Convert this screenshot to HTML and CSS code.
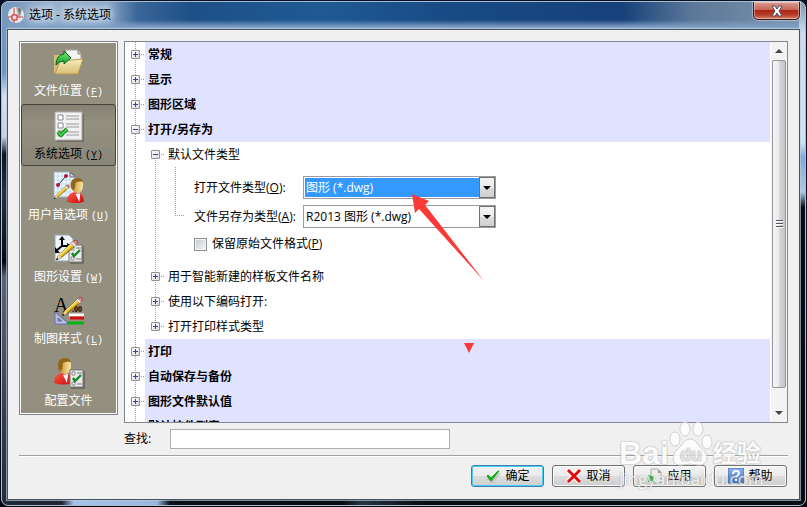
FILE: index.html
```html
<!DOCTYPE html>
<html lang="zh-CN">
<head>
<meta charset="utf-8">
<title>选项 - 系统选项</title>
<link rel="stylesheet" href="styles.css">
</head>
<body>
<svg class="defs" aria-hidden="true">
  <defs>
    <linearGradient id="skin" x1="0" x2="1"><stop offset="0" stop-color="#b47a24"/><stop offset=".45" stop-color="#e2b964"/><stop offset="1" stop-color="#fbe7a8"/></linearGradient>
    <linearGradient id="gold" x1="0" y1="0" x2="0" y2="1"><stop offset="0" stop-color="#f8ecc0"/><stop offset="1" stop-color="#d9bd74"/></linearGradient>
    <linearGradient id="red" x1="0" x2="1" y2="1"><stop offset="0" stop-color="#ff5a50"/><stop offset="1" stop-color="#c80a0a"/></linearGradient>
    <linearGradient id="green" x1="0" y1="0" x2="0" y2="1"><stop offset="0" stop-color="#7cf07c"/><stop offset="1" stop-color="#0b9a1c"/></linearGradient>
    <linearGradient id="blue" x1="0" y1="0" x2="0" y2="1"><stop offset="0" stop-color="#8db4ea"/><stop offset="1" stop-color="#3f74bd"/></linearGradient>
    <g id="pencil">
      <path d="m1 24 2-5L19 4l4 4L6 22z" fill="#f6cf30" stroke="#4a3810" stroke-width=".8"/>
      <path d="M4 19 19 5" stroke="#fff3a0" stroke-width="1.2"/>
      <path d="M6 21 22 7" stroke="#b5850f" stroke-width="1"/>
      <path d="m20 3 1-1q2-1 4 0 1 2 0 4l-1 1z" fill="#e88080" stroke="#7e3333" stroke-width=".8"/>
      <path d="m18 5 2-2 4 4-2 2z" fill="#e8e8e8" stroke="#888" stroke-width=".5"/>
      <path d="m1 24 2-5 3 3z" fill="#f3d9a4"/><path d="m0 25 1-3 2 2z" fill="#111"/>
    </g>
    <g id="person">
      <path d="M1 26q0-8 7-10h5q5 1 6 10-9 3-18 0z" fill="url(#red)"/>
      <path d="m10 18 4 8 1-9z" fill="#fff"/>
      <path d="M6 8q0-6 6-6t6 6q0 9-6 9t-6-9z" fill="url(#skin)"/>
      <path d="M5 10q-1-9 7-9 5 0 6 4-4-1-8 1 0 5-2 8-3-1-3-4z" fill="#94661a"/>
    </g>
    <g id="sheet">
      <path d="M2 2h14v18H2z" fill="#55534b" opacity=".6"/>
      <path d="M1 1h13v17H1z" fill="#ececec" stroke="#777"/>
      <path d="M3 3h3v3H3zM3 13h3v3H3z" fill="#fff" stroke="#888"/>
      <path d="M8 4h5M8 15h5" stroke="#777"/>
      <path d="m4 9 2 3 6-6" fill="none" stroke="#178a27" stroke-width="2.4"/>
    </g>
  </defs>
</svg>

<div class="window">
  <header class="titlebar">
    <svg class="app-icon" viewBox="0 0 18 18" aria-hidden="true">
      <circle cx="9" cy="9" r="8" fill="#e9e7e6"/>
      <path d="m9 1 2 9 2 1 2-7q-2-3-6-3z" fill="#a9a6a6"/><path d="m11 2 2 7 1-6z" fill="#6f6c6c"/>
      <path d="M1 11h15M7 2v15" stroke="#d23c3c"/>
      <path d="M5 9h5v5H5z" fill="#f2d6d6" stroke="#b82020"/>
    </svg>
    <h1 class="title">选项 - 系统选项</h1>
    <button class="close" type="button" aria-label="关闭">
      <svg viewBox="0 0 14 12" width="14" height="12" aria-hidden="true"><path d="M2 1h3l2 3 2-3h3l-3 5 3 5H9L7 8l-2 3H2l3-5z" fill="#fff" stroke="#4c5468"/></svg>
    </button>
  </header>

  <main class="client">
    <div class="body">
      <nav class="sidebar">
        <button class="nav-item" type="button">
          <svg viewBox="0 0 32 32" width="32" height="32" aria-hidden="true">
            <path d="M1 8h8l2 2h10v16H1z" fill="#d5bd76"/>
            <path d="M13 3h12l3 4v12H13z" fill="#f3f3f3" stroke="#aaa"/><path d="M25 3v4h3" fill="#ccc" stroke="#888"/>
            <path d="m7 14 23-2-5 15H2z" fill="url(#gold)" stroke="#b59a50"/>
            <path d="M3 18q0-10 8-11V4l7 7-7 6v-3q-5 0-8 4z" fill="url(#green)" stroke="#08661a"/>
          </svg>
          <span>文件位置 <kbd>(<u>F</u>)</kbd></span>
        </button>
        <button class="nav-item selected" type="button" aria-current="page">
          <svg viewBox="0 0 32 32" width="32" height="32" aria-hidden="true">
            <path d="M4 4h27v28H4z" fill="#5b5950" opacity=".6"/>
            <path d="M2 2h27v28H2z" fill="#f1f1f1" stroke="#aaa"/>
            <path d="M5 5h5v5H5zM5 13h5v5H5zM5 21h5v5H5z" fill="#fff" stroke="#888"/>
            <path d="M13 6h13M13 9h13M13 14h13M13 17h13M13 22h13M13 25h13" stroke="#999"/>
            <path d="m5 22 3 3 6-6" fill="none" stroke="#178a27" stroke-width="4"/><path d="m5 22 3 3 6-6" fill="none" stroke="#43cf43" stroke-width="2"/>
          </svg>
          <span>系统选项 <kbd>(<u>Y</u>)</kbd></span>
        </button>
        <button class="nav-item" type="button">
          <svg viewBox="0 0 32 32" width="32" height="32" aria-hidden="true">
            <path d="M1 1h16l5 5v20H1z" fill="#f4f9fd" stroke="#9ab"/>
            <path d="M5 1v25M9 1v25M13 1v25M17 1v25M1 5h20M1 9h20M1 13h20M1 17h20M1 21h20" stroke="#bcdcf0"/>
            <path d="M17 1v5h5z" fill="#d5dde5" stroke="#667"/>
            <path d="m5 14 8-9" stroke="#333"/><circle cx="5" cy="14" r="2" fill="#b4163a"/><circle cx="13" cy="5" r="2" fill="#b4163a"/>
            <use href="#pencil" transform="translate(1 13) scale(.6)"/>
            <use href="#person" transform="translate(13 6) scale(.95)"/>
          </svg>
          <span>用户首选项 <kbd>(<u>U</u>)</kbd></span>
        </button>
        <button class="nav-item" type="button">
          <svg viewBox="0 0 32 32" width="32" height="32" aria-hidden="true">
            <path d="M2 2h14l4 4v22H2z" fill="#eef4fb" stroke="#9aa6b3"/>
            <path d="M9 13V5M9 13h9M9 13l-6 5" stroke="#000" stroke-width="2"/>
            <path d="m6 7 3-4 3 4zM14 10l5 3-5 4zM2 14v6h5z" fill="#000"/>
            <use href="#sheet" x="15" y="11"/>
            <use href="#pencil" transform="translate(3 6) scale(.85)"/>
          </svg>
          <span>图形设置 <kbd>(<u>W</u>)</kbd></span>
        </button>
        <button class="nav-item" type="button">
          <svg viewBox="0 0 32 32" width="32" height="32" aria-hidden="true">
            <text x="1" y="17" class="glyph-a">A</text><text x="19" y="17" class="glyph-n">.00</text>
            <path d="M2 17v12h14z" fill="#b9bedf" stroke="#6670b3"/><path d="M5 23v3h4z" fill="#949080" stroke="#6670b3"/>
            <path d="M16 20h15" stroke="#fff" stroke-width="3"/><path d="M17 23h14" stroke="#d01010" stroke-width="3"/><path d="M14 28h17" stroke="#08b414" stroke-width="3"/>
            <use href="#pencil" transform="translate(9 1) scale(.8)"/>
          </svg>
          <span>制图样式 <kbd>(<u>L</u>)</kbd></span>
        </button>
        <button class="nav-item" type="button">
          <svg viewBox="0 0 32 32" width="32" height="32" aria-hidden="true">
            <use href="#person"/>
            <use href="#sheet" x="16" y="12"/>
          </svg>
          <span>配置文件</span>
        </button>
      </nav>

      <div class="right">
        <section class="tree">
          <div class="tree-content">
            <div class="row group"><button class="toggle plus" type="button" aria-label="展开"></button><span class="label">常规</span></div>
            <div class="row group"><button class="toggle plus" type="button" aria-label="展开"></button><span class="label">显示</span></div>
            <div class="row group"><button class="toggle plus" type="button" aria-label="展开"></button><span class="label">图形区域</span></div>
            <div class="row group"><button class="toggle" type="button" aria-label="折叠"></button><span class="label">打开/另存为</span></div>
            <div class="children">
              <div class="row"><button class="toggle" type="button" aria-label="折叠"></button><span class="label">默认文件类型</span></div>
              <form class="form">
                <div class="field">
                  <label for="open-type">打开文件类型(<u>O</u>):</label>
                  <div class="combo focused"><select id="open-type"><option>图形 (*.dwg)</option></select><span class="drop"></span></div>
                </div>
                <div class="field">
                  <label for="save-type">文件另存为类型(<u>A</u>):</label>
                  <div class="combo"><select id="save-type"><option>R2013 图形 (*.dwg)</option></select><span class="drop"></span></div>
                </div>
                <div class="check"><input type="checkbox" id="keep"><label for="keep">保留原始文件格式(<u>P</u>)</label></div>
              </form>
              <div class="row"><button class="toggle plus" type="button" aria-label="展开"></button><span class="label">用于智能新建的样板文件名称</span></div>
              <div class="row"><button class="toggle plus" type="button" aria-label="展开"></button><span class="label">使用以下编码打开:</span></div>
              <div class="row"><button class="toggle plus" type="button" aria-label="展开"></button><span class="label">打开打印样式类型</span></div>
            </div>
            <div class="row group"><button class="toggle plus" type="button" aria-label="展开"></button><span class="label">打印</span></div>
            <div class="row group"><button class="toggle plus" type="button" aria-label="展开"></button><span class="label">自动保存与备份</span></div>
            <div class="row group"><button class="toggle plus" type="button" aria-label="展开"></button><span class="label">图形文件默认值</span></div>
            <div class="row group"><button class="toggle plus" type="button" aria-label="展开"></button><span class="label">默认控件列表</span></div>
          </div>
          <div class="scrollbar" aria-hidden="true">
            <span class="scroll-end"><svg viewBox="0 0 8 4" width="8" height="4"><path d="M0 4 4 0l4 4z" fill="#444"/></svg></span>
            <span class="thumb"><i></i><i></i><i></i></span>
            <span class="scroll-end bottom"><svg viewBox="0 0 8 4" width="8" height="4"><path d="M0 0h8L4 4z" fill="#444"/></svg></span>
          </div>
          <svg class="pointer" viewBox="0 0 76 164" width="76" height="164" aria-hidden="true">
            <path d="m2 3 17 7-4 4 59 76L9 18l-4 4z" fill="#fb3a38"/>
            <path d="M54 152h10l-5 10z" fill="#fb3a38"/>
          </svg>
        </section>
        <div class="search">
          <label for="find">查找:</label>
          <input id="find" type="text">
        </div>
      </div>
    </div>

    <hr class="rule">

    <footer class="actions">
      <button class="btn default" type="button">
        <svg viewBox="0 0 16 16" width="16" height="16" aria-hidden="true"><path d="m3 10 4 4 8-9" fill="none" stroke="#aaa" stroke-width="2" opacity=".5"/><path d="m2 8 1-1 3 3 7-7h1L6 13z" fill="#16b51c" stroke="#13a819"/></svg>确定</button>
      <button class="btn" type="button">
        <svg viewBox="0 0 16 16" width="16" height="16" aria-hidden="true"><path d="m2 2 12 12M14 2 2 14" stroke="#fff" stroke-width="5"/><path d="m2 2 12 12M14 2 2 14" stroke="#e30b10" stroke-width="3"/></svg>取消</button>
      <button class="btn" type="button">
        <svg viewBox="0 0 16 16" width="16" height="16" aria-hidden="true"><path d="M4 1h7l3 3v11H4z" fill="#ececec" stroke="#aaa"/><path d="M11 1v4h3" fill="#999"/><path d="m1 7 6 2v6l-3-2-3 1 1-3z" fill="#2cae34"/></svg>应用</button>
      <button class="btn" type="button">
        <svg viewBox="0 0 16 16" width="16" height="16" aria-hidden="true"><path d="M0 0h16v15H0z" fill="url(#blue)" stroke="#4a6fa8"/><path d="M5 6q0-3 3-3t3 2q0 2-3 4M8 11v2" fill="none" stroke="#fff" stroke-width="2"/></svg>帮助</button>
    </footer>
  </main>
</div>

<div class="watermark" aria-hidden="true">
  <div class="brand"><span class="bai">Bai</span>
    <svg viewBox="0 0 44 48" width="44" height="48">
      <g class="paw"><ellipse cx="6" cy="18" rx="5" ry="7"/><ellipse cx="16" cy="8" rx="5" ry="7"/><ellipse cx="29" cy="8" rx="5" ry="7"/><ellipse cx="38" cy="21" rx="5" ry="7"/>
      <path d="M21 18q5 0 9 7 9 7 8 13-2 7-9 6-8-2-16 0-8 1-9-6 0-7 8-13 4-7 9-7z"/></g>
      <text x="11" y="40" class="du">du</text>
    </svg>
    <span class="jy">经验</span></div>
  <div class="url">jingyan.baidu.com</div>
</div>
</body>
</html>
```
FILE: styles.css
```css
* { box-sizing: border-box; }

body {
  margin: 0;
  padding: 1px;
  height: 100vh;
  background: linear-gradient(#04102a, #05142e 40%, #020812);
  font: 12px/16px "Open Sans", "Noto Sans CJK SC", sans-serif;
  color: #000;
}

button, input, select { font: inherit; color: inherit; margin: 0; }
button { padding: 0; border: 0; background: none; }
.defs { position: absolute; width: 0; height: 0; }

/* Glass frame */
.window {
  display: flex;
  flex-direction: column;
  height: 100%;
  padding: 0 5px 5px;
  border: 1px solid #aebdca;
  border-radius: 7px;
  background:
    linear-gradient(#7899bf, #7196bf 70px, #d5e2f3 95px, #c3d0e3 135px, #0d141d 152px, #26323f 190px, #101318 245px, #05070b 260px, #5e6272 275px, #50505f 350px, #343a4a 420px, #202c3c) left / 6px 100% no-repeat,
    linear-gradient(#7d95ae, #c9dcf0 30px, #cfe4f8 140px, #7fa8d6 155px, #a9c9ec 190px, #060c12 205px) right / 6px 100% no-repeat,
    linear-gradient(90deg, #1d2a39, #222334 60px, #a3c4ea 72px, #9ab7e0 155px, #0a1119 168px, #080d14 340px, #263444 360px, #080d14 420px) bottom / 100% 6px no-repeat,
    linear-gradient(transparent 18px, #7f9fc5 25px, #b8d0ea 29px, transparent 29px),
    linear-gradient(90deg, #7293ba, #98b1cd 50px, #8ba8c9 105px, #3b6699 135px, #1d5087 190px, #1f5a93 320px, #184a84 450px, #17417a 620px, #5c7899 690px, #7089a5 760px, #7d95ae);
}

.titlebar {
  display: flex;
  align-items: flex-start;
  flex: 0 0 27px;
}
.app-icon { width: 18px; height: 18px; margin: 4px 4px 0 0; }
.title {
  flex: 1;
  margin: 5px 0 0;
  font: inherit;
  text-shadow: 0 0 6px #dce8f5, 0 0 8px #dce8f5, 0 0 10px #dce8f5;
}
.close {
  display: flex;
  align-items: center;
  justify-content: center;
  width: 47px;
  height: 18px;
  border: 1px solid #40161d;
  border-top: 0;
  border-radius: 0 0 5px 5px;
  background: linear-gradient(#dc9c92, #c96558 45%, #ac2815 50%, #b63c25 75%, #d8826b);
  box-shadow: inset 0 0 0 1px #ffffff66, 0 0 1px 1px #ffffff66;
}

.client {
  display: flex;
  flex-direction: column;
  flex: 1;
  min-height: 0;
  padding: 11px 11px 12px;
  border: 1px solid #46545f;
  background: #f0f0f0;
  box-shadow: 0 0 0 1px #bccbd8aa;
}
.body {
  display: flex;
  align-items: flex-start;
  gap: 6px;
  flex: 1;
  min-height: 0;
}

/* Category bar */
.sidebar {
  flex: 0 0 99px;
  padding: 0 1px;
  border: 1px solid #7f8287;
  background: #949080;
  box-shadow: inset 0 0 0 1px #fff;
}
.nav-item {
  display: flex;
  flex-direction: column;
  align-items: center;
  gap: 4px;
  width: 100%;
  height: 62px;
  padding-top: 5px;
  color: #fff;
  white-space: nowrap;
}
.nav-item kbd { font: 10px/16px "Liberation Mono", monospace; }
.nav-item.selected {
  border: 1px solid #43423b;
  border-radius: 3px;
  background: linear-gradient(#858273, #949080 30%, #89867a);
  color: #000;
}
.glyph-a { font: 20px "Liberation Serif", serif; }
.glyph-n { font: bold 8px "Liberation Serif", serif; }

/* Tree */
.right {
  display: flex;
  flex-direction: column;
  gap: 6px;
  flex: 1;
  min-width: 0;
  height: 100%;
}
.tree {
  position: relative;
  display: flex;
  flex: 1;
  min-height: 0;
  overflow: hidden;
  border: 1px solid #82868f;
  background: #fff;
}
.tree-content {
  flex: 1;
  min-width: 0;
  background: repeating-linear-gradient(#a0a0a0 0 1px, transparent 1px 2px) 10px 0 / 1px 100% no-repeat;
}
.row {
  display: flex;
  align-items: center;
  gap: 1px;
  height: 25px;
  padding-left: 6px;
}
.row .label { padding-left: 7px; }
.group {
  font-weight: bold;
  background: linear-gradient(#dfe3ff, #dfe3ff) 20px 0 / 100% 100% no-repeat;
}
.children {
  margin-left: 20px;
  background: repeating-linear-gradient(#a0a0a0 0 1px, transparent 1px 2px) 10px 16px / 1px 168px no-repeat;
}
.toggle {
  flex: 0 0 9px;
  height: 9px;
  border: 1px solid #8e8f8f;
  border-radius: 1px;
  background:
    linear-gradient(#2b4a94, #2b4a94) center / 5px 1px no-repeat,
    linear-gradient(135deg, #fff, #dcdcdc);
}
.toggle.plus {
  background:
    linear-gradient(#2b4a94, #2b4a94) center / 5px 1px no-repeat,
    linear-gradient(#2b4a94, #2b4a94) center / 1px 5px no-repeat,
    linear-gradient(135deg, #fff, #dcdcdc);
}
.toggle + .label {
  background: repeating-linear-gradient(90deg, #a0a0a0 0 1px, transparent 1px 2px) 0 50% / 4px 1px no-repeat;
}
.form {
  display: flex;
  flex-direction: column;
  gap: 6px;
  padding: 9px 0 10px 49px;
  background:
    repeating-linear-gradient(#a0a0a0 0 1px, transparent 1px 2px) 30px 0 / 1px 49px no-repeat,
    repeating-linear-gradient(90deg, #a0a0a0 0 1px, transparent 1px 2px) 30px 48px / 10px 1px no-repeat;
}
.field { display: flex; align-items: center; }
.field label { flex: 0 0 109px; white-space: nowrap; }
.combo {
  display: flex;
  width: 193px;
  height: 23px;
  padding: 1px 0 1px 1px;
  border: 1px solid #9b9b9f;
  background: #fff;
}
.combo select {
  flex: 1;
  min-width: 0;
  padding: 0 1px;
  border: 0;
  border-radius: 0;
  appearance: none;
  background: #fff;
  outline: 0;
}
.combo.focused select { background: #3399ff; color: #fff; }
.drop {
  flex: 0 0 16px;
  margin: -1px 0;
  border: 1px solid #707070;
  background: linear-gradient(#f4f4f4, #ebebeb 50%, #dcdcdc 50%, #cfcfcf);
  display: grid;
  place-items: center;
  pointer-events: none;
}
.drop::before {
  content: "";
  border: 4px solid transparent;
  border-top-color: #000;
  border-bottom: 0;
}
.check { display: flex; align-items: center; gap: 5px; height: 20px; }
.check input {
  width: 13px;
  height: 13px;
  appearance: none;
  border: 1px solid #8e8f8f;
  background: linear-gradient(135deg, #c4c8cf, #f6f6f6);
  box-shadow: inset 0 0 0 1px #f4f4f4;
}

.scrollbar {
  display: flex;
  flex-direction: column;
  flex: 0 0 17px;
  padding: 0 1px;
  background: #f3f3f3;
  border-left: 1px solid #fff;
}
.scroll-end { display: grid; place-items: center; flex: 0 0 18px; }
.scroll-end.bottom { margin-top: 16px; }
.thumb {
  display: flex;
  flex-direction: column;
  align-items: center;
  justify-content: center;
  gap: 1px;
  flex: 1;
  border: 1px solid #96979b;
  border-radius: 2px;
  background: linear-gradient(90deg, #f5f5f5, #e9e9eb 50%, #d4d4d8 55%, #c4c4ca);
}
.thumb i { width: 7px; height: 2px; background: #55575c; border-bottom: 1px solid #fff; }

/* Callout arrow over the list */
.pointer { position: absolute; left: 285px; top: 149px; }

.search { display: flex; align-items: center; height: 20px; }
.search label { flex: 0 0 46px; }
.search input {
  width: 280px;
  height: 20px;
  padding: 0 4px;
  border: 1px solid #abadb3;
  background: #fff;
}
.rule {
  width: 100%;
  height: 2px;
  margin: 6px 0 8px;
  border: 0;
  border-top: 1px solid #a0a0a0;
  background: #fff;
}
.actions { display: flex; justify-content: flex-end; gap: 8px; padding-right: 1px; }
.btn {
  display: flex;
  align-items: center;
  justify-content: center;
  gap: 4px;
  width: 73px;
  height: 22px;
  border: 1px solid #707070;
  border-radius: 3px;
  background: linear-gradient(#f3f3f3, #ebebeb 50%, #dddddd 50%, #cfcfcf);
  box-shadow: inset 0 0 0 1px #fcfcfc;
}
.btn.default { border-color: #3c7fb1; box-shadow: inset 0 0 0 1px #48cdf5; }

/* Translucent site mark over the corner */
.watermark {
  position: absolute;
  right: 44px;
  bottom: 18px;
  width: 144px;
  color: #fff;
  opacity: .85;
  pointer-events: none;
  text-shadow: 0 0 2px #aaa, 0 0 1px #999;
}
.brand { display: flex; align-items: flex-end; height: 48px; }
.bai { font: bold 32px/32px "Liberation Sans", sans-serif; }
.jy { font: bold 24px/34px "Noto Sans CJK SC", sans-serif; }
.paw { fill: #fff; stroke: #ccc; }
.du { font: bold 18px "Liberation Sans", sans-serif; fill: #e2e2e2; }
.url { font: 17px/20px "Open Sans", sans-serif; white-space: nowrap; opacity: .8; }
```
